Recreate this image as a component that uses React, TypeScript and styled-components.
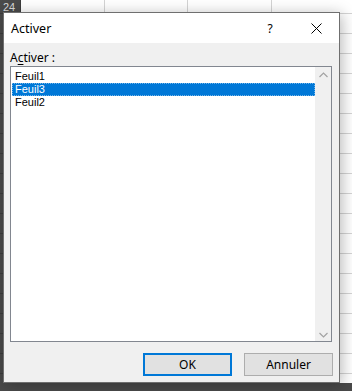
import React from "react";
import styled, { createGlobalStyle } from "styled-components";

const uiFont = `"Noto Sans", "Liberation Sans", sans-serif`;
const listFont = `"Liberation Sans", Arial, sans-serif`;
const accent = "#0078d7";

const GlobalStyle = createGlobalStyle`
  html, body {
    margin: 0;
    padding: 0;
    background: #ffffff;
  }
  body {
    font-family: ${uiFont};
  }
`;

const Stage = styled.div`
  position: relative;
  width: 352px;
  height: 391px;
  overflow: hidden;
  display: flex;
  flex-direction: column;
  background: #ffffff;
`;

const Sheet = styled.div`
  flex: 1;
  display: grid;
  grid-template-columns: 21px 84px 83px 84px 84px;
  grid-auto-rows: 20px;
  margin-top: -6px;
  overflow: hidden;
`;

const Cell = styled.div<{ $head?: boolean }>`
  box-sizing: border-box;
  border-right: 1px solid ${(p) => (p.$head ? "#3c3c3c" : "#d4d4d4")};
  border-bottom: 1px solid ${(p) => (p.$head ? "#3c3c3c" : "#d4d4d4")};
  background: ${(p) => (p.$head ? "#4a4a4a" : "#ffffff")};
  color: #d8d8d8;
  font-family: ${listFont};
  font-size: 11px;
  line-height: 13px;
  padding: 7px 0 0 3px;
`;

const StatusBar = styled.div`
  height: 8px;
  background: #4a4a4a;
`;

const Dialog = styled.div`
  position: absolute;
  left: 3px;
  top: 12px;
  width: 337px;
  height: 371px;
  box-sizing: border-box;
  border: 1px solid #6f6f6f;
  background: #f0f0f0;
  box-shadow: 2px 2px 14px rgba(0, 0, 0, 0.28);
  display: flex;
  flex-direction: column;
  font-size: 12px;
  color: #000;
`;

const TitleBar = styled.div`
  height: 30px;
  background: #ffffff;
  display: flex;
  align-items: center;
  padding-left: 7px;
`;

const Title = styled.div`
  flex: 1;
  font-size: 12.5px;
`;

const TitleButton = styled.div`
  width: 46px;
  height: 30px;
  display: flex;
  align-items: center;
  justify-content: center;
  font-size: 12px;
`;

const Body = styled.div`
  flex: 1;
  display: flex;
  flex-direction: column;
  padding: 6px;
`;

const Label = styled.div`
  height: 15px;
  line-height: 15px;
  margin: 1px 0 1px;
  u {
    text-decoration-thickness: 1px;
    text-underline-offset: 2px;
  }
`;

const ListBox = styled.div`
  height: 276px;
  box-sizing: border-box;
  border: 1px solid #828790;
  background: #ffffff;
  display: flex;
  margin-right: 1px;
`;

const Items = styled.div`
  flex: 1;
  padding: 3px 0 0 1px;
`;

const Item = styled.div<{ $selected?: boolean }>`
  height: 13px;
  line-height: 11px;
  box-sizing: border-box;
  padding-left: 2px;
  font-family: ${listFont};
  font-size: 11px;
  color: ${(p) => (p.$selected ? "#ffffff" : "#000000")};
  background: ${(p) => (p.$selected ? accent : "transparent")};
  border: 1px dotted ${(p) => (p.$selected ? "rgba(255,255,255,0.45)" : "transparent")};
  overflow: hidden;
`;

const ScrollBar = styled.div`
  width: 16px;
  background: #f0f0f0;
  display: flex;
  flex-direction: column;
  justify-content: space-between;
  align-items: center;
  padding: 5px 0 3px;
`;

const Footer = styled.div`
  display: flex;
  justify-content: flex-end;
  gap: 12px;
  margin-top: auto;
`;

const Button = styled.div<{ $default?: boolean }>`
  width: 89px;
  height: 23px;
  box-sizing: border-box;
  display: flex;
  align-items: center;
  justify-content: center;
  background: #e1e1e1;
  border: ${(p) => (p.$default ? `2px solid ${accent}` : "1px solid #adadad")};
  font-size: 12px;
`;

const Chevron = ({ up }: { up?: boolean }) => (
  <svg width="9" height="6" viewBox="0 0 9 6">
    <path
      d={up ? "M0.5 5 L4.5 1 L8.5 5" : "M0.5 1 L4.5 5 L8.5 1"}
      fill="none"
      stroke="#a3a3a3"
      strokeWidth="1.2"
    />
  </svg>
);

const CloseIcon = () => (
  <svg width="11" height="11" viewBox="0 0 11 11">
    <path d="M0.5 0.5 L10.5 10.5 M10.5 0.5 L0.5 10.5" stroke="#000" strokeWidth="1" />
  </svg>
);

const sheets = [
  { name: "Feuil1", selected: false },
  { name: "Feuil3", selected: true },
  { name: "Feuil2", selected: false },
];

export default function App() {
  const rows = Array.from({ length: 20 }, (_, i) => i);
  return (
    <>
      <GlobalStyle />
      <Stage>
        <Sheet>
          {rows.map((r) => (
            <React.Fragment key={r}>
              <Cell $head>{r === 0 ? "24" : ""}</Cell>
              <Cell />
              <Cell />
              <Cell />
              <Cell />
            </React.Fragment>
          ))}
        </Sheet>
        <StatusBar />
        <Dialog>
          <TitleBar>
            <Title>Activer</Title>
            <TitleButton>?</TitleButton>
            <TitleButton>
              <CloseIcon />
            </TitleButton>
          </TitleBar>
          <Body>
            <Label>
              A<u>c</u>tiver :
            </Label>
            <ListBox>
              <Items>
                {sheets.map((s) => (
                  <Item key={s.name} $selected={s.selected}>
                    {s.name}
                  </Item>
                ))}
              </Items>
              <ScrollBar>
                <Chevron up />
                <Chevron />
              </ScrollBar>
            </ListBox>
            <Footer>
              <Button $default>OK</Button>
              <Button>Annuler</Button>
            </Footer>
          </Body>
        </Dialog>
      </Stage>
    </>
  );
}
